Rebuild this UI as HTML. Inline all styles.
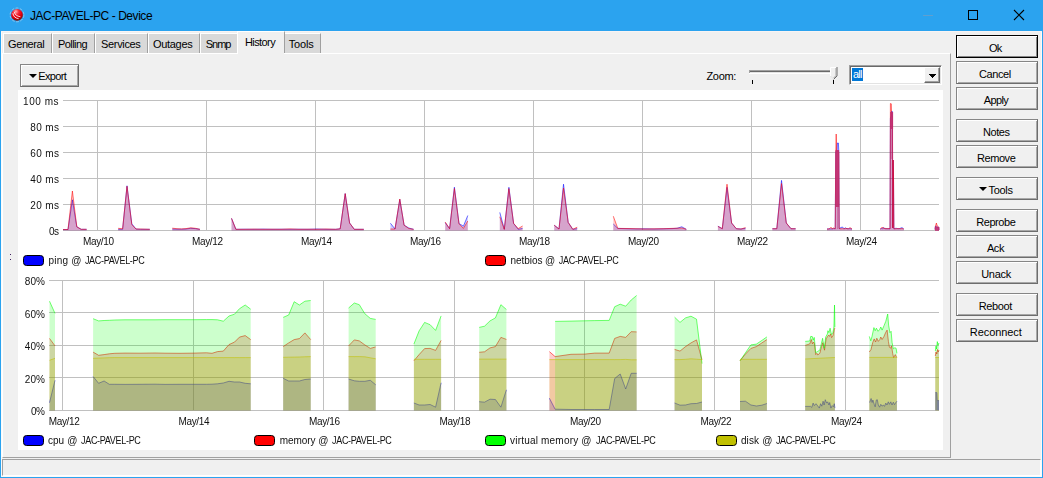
<!DOCTYPE html>
<html><head><meta charset="utf-8">
<style>
*{box-sizing:border-box;margin:0;padding:0}
html,body{width:1043px;height:478px;overflow:hidden;background:#f0f0f0;font-family:"Liberation Sans",sans-serif;font-size:11px;color:#000}
.abs{position:absolute}
#win{position:absolute;left:0;top:0;width:1043px;height:478px;background:#f0f0f0}
.wb{position:absolute;background:#2ba3ef;z-index:10}
#title{position:absolute;left:0;top:0;width:1043px;height:31px;background:#2ba3ef}
#ttext{position:absolute;left:30px;top:9px;font-size:12px;line-height:15px;color:#000;white-space:nowrap;letter-spacing:-0.45px}
.tab{position:absolute;top:33px;height:20px;background:#d9d9d9;border-left:1px solid #fff;border-top:1px solid #fff;border-right:1px solid #a0a0a0}
.tab.sel{top:31px;height:22px;background:#f0f0f0;z-index:3}
.t{position:absolute;white-space:nowrap;font-size:11px;line-height:13px;height:13px}
#panel{position:absolute;left:2px;top:53px;width:949px;height:405px;border:1px solid #fff;border-right:1px solid #a0a0a0;border-bottom:1px solid #a0a0a0;background:#f0f0f0}
.btn{position:absolute;left:956px;width:82px;height:23px;background:#f0f0f0;border:1px solid #868686;border-right-color:#6d6d6d;border-bottom-color:#6d6d6d;box-shadow:inset 1px 1px 0 #fff,inset -1px -1px 0 #a8a8a8}
.btn.def{border:1px solid #000;box-shadow:inset 1px 1px 0 #fff,inset -1px -1px 0 #868686}
.tri{position:absolute;width:0;height:0;border-left:4px solid transparent;border-right:4px solid transparent;border-top:4px solid #000}
#white{position:absolute;left:18px;top:90px;width:925px;height:360px;background:#fff}
#status{position:absolute;left:2px;top:459px;width:1039px;height:17px;border:1px solid #a0a0a0;border-right-color:#fff;border-bottom-color:#fff}
</style></head><body>
<div id="win">
<div id="title"></div>
<div class="wb" style="left:0;top:0;width:1px;height:478px"></div><div class="wb" style="left:1042px;top:0;width:1px;height:478px"></div><div class="wb" style="left:0;top:477px;width:1043px;height:1px"></div>
<svg class="abs" style="left:8px;top:6px" width="18" height="18" viewBox="8 6 18 18"><defs><radialGradient id="rg" cx="0.4" cy="0.22" r="0.85"><stop offset="0" stop-color="#ffb4b8"/><stop offset="0.3" stop-color="#f62836"/><stop offset="0.6" stop-color="#e2000c"/><stop offset="1" stop-color="#5a1206"/></radialGradient></defs><circle cx="17" cy="14.9" r="6.9" fill="none" stroke="#d8e0e8" stroke-opacity="0.6" stroke-width="0.9" stroke-dasharray="3 1.4"/><circle cx="17" cy="14.9" r="5.9" fill="url(#rg)"/><path d="M12.9 13.2 Q13.4 17.8 18.6 18.7" fill="none" stroke="#fff" stroke-opacity="0.95" stroke-width="0.9"/><path d="M14.4 12 Q15 16 20.4 16.7" fill="none" stroke="#fff" stroke-opacity="0.9" stroke-width="0.9"/></svg>
<div id="ttext">JAC-PAVEL-PC - Device</div>
<svg class="abs" style="left:915px;top:5px" width="120" height="22" viewBox="915 5 120 22" shape-rendering="crispEdges"><rect x="923" y="15" width="10" height="1" fill="#5f9fcf"/><rect x="968.5" y="10.5" width="9" height="9" fill="none" stroke="#000" stroke-width="1"/><g shape-rendering="auto"><path d="M1014 10 L1024 20 M1024 10 L1014 20" stroke="#000" stroke-width="1.1" fill="none"/></g></svg>

<div class="tab" style="left:3px;width:49px"></div>
<span class="t" style="left:8px;top:38px;letter-spacing:-0.390px;z-index:5">General</span>
<div class="tab" style="left:52px;width:43px"></div>
<span class="t" style="left:58px;top:38px;letter-spacing:-0.555px;z-index:5">Polling</span>
<div class="tab" style="left:95px;width:53px"></div>
<span class="t" style="left:101.1px;top:38px;letter-spacing:-0.355px;z-index:5">Services</span>
<div class="tab" style="left:148px;width:52px"></div>
<span class="t" style="left:153px;top:38px;letter-spacing:-0.316px;z-index:5">Outages</span>
<div class="tab" style="left:200px;width:37px;border-right:0"></div>
<span class="t" style="left:205.7px;top:38px;letter-spacing:-0.983px;z-index:5">Snmp</span>
<div class="tab sel" style="left:237px;width:48px"></div>
<span class="t" style="left:244.9px;top:36px;letter-spacing:-0.572px;z-index:5">History</span>
<div class="tab" style="left:285px;width:36px;border-left:0"></div>
<span class="t" style="left:288.8px;top:38px;letter-spacing:-0.172px;z-index:5">Tools</span>
<div class="abs" style="left:238px;top:53px;width:46px;height:1px;background:#f0f0f0;z-index:4"></div>
<div id="panel"></div>
<div class="btn" style="left:20px;top:64px;width:59px"></div><div class="tri" style="left:29px;top:74px"></div><span class="t" style="left:38.2px;top:70px;letter-spacing:-0.619px">Export</span>
<span class="t" style="left:706.5px;top:70px;letter-spacing:-0.347px">Zoom:</span>
<div class="btn def" style="top:35px"></div><span class="t" style="left:989px;top:42px;letter-spacing:-0.762px">Ok</span>
<div class="btn" style="top:61px"></div><span class="t" style="left:979px;top:68px;letter-spacing:-0.390px">Cancel</span>
<div class="btn" style="top:87px"></div><span class="t" style="left:983.8px;top:94px;letter-spacing:-0.658px">Apply</span>
<div class="btn" style="top:119px"></div><span class="t" style="left:983px;top:126px;letter-spacing:-0.463px">Notes</span>
<div class="btn" style="top:145px"></div><span class="t" style="left:977.1px;top:152px;letter-spacing:-0.454px">Remove</span>
<div class="btn" style="top:177px"></div><span class="t" style="left:988.5px;top:184px;letter-spacing:-0.297px">Tools</span>
<div class="tri" style="left:979px;top:187px"></div>
<div class="btn" style="top:209px"></div><span class="t" style="left:976.2px;top:216px;letter-spacing:-0.434px">Reprobe</span>
<div class="btn" style="top:235px"></div><span class="t" style="left:986.9px;top:242px;letter-spacing:-0.422px">Ack</span>
<div class="btn" style="top:261px"></div><span class="t" style="left:981.2px;top:268px;letter-spacing:-0.297px">Unack</span>
<div class="btn" style="top:293px"></div><span class="t" style="left:978.7px;top:300px;letter-spacing:-0.357px">Reboot</span>
<div class="btn" style="top:319px"></div><span class="t" style="left:969.8px;top:326px;letter-spacing:-0.074px">Reconnect</span>



<!-- slider -->
<svg class="abs" style="left:745px;top:62px" width="98" height="26" viewBox="745 62 98 26" shape-rendering="crispEdges">
<rect x="749" y="70" width="83" height="1" fill="#a0a0a0"/><rect x="749" y="71" width="83" height="1" fill="#696969"/><rect x="749" y="70" width="1" height="3" fill="#a0a0a0"/><rect x="750" y="72" width="82" height="1" fill="#e3e3e3"/><rect x="749" y="73" width="84" height="1" fill="#fff"/><rect x="832" y="70" width="1" height="4" fill="#fff"/>
<rect x="752" y="80" width="1" height="4" fill="#000"/><rect x="833" y="80" width="1" height="4" fill="#000"/>
<g shape-rendering="auto"><path d="M830.5 67.5 H837 V76 L833.7 79.3 L830.5 76 Z" fill="#f0f0f0"/><path d="M830.5 76 V67.5 H836.5" fill="none" stroke="#fff" stroke-width="1"/><path d="M837 67 V76 L833.7 79.3" fill="none" stroke="#696969" stroke-width="1"/><path d="M836 68 V75.6 L833.7 78" fill="none" stroke="#a0a0a0" stroke-width="1"/><path d="M830.5 76 L833.5 79" fill="none" stroke="#e3e3e3" stroke-width="1"/></g>
</svg>
<!-- combo -->
<div class="abs" style="left:849px;top:65px;width:93px;height:20px;background:#fff;border:1px solid #a0a0a0;border-right-color:#fff;border-bottom-color:#fff;box-shadow:inset 1px 1px 0 #696969,inset -1px -1px 0 #e3e3e3"></div>
<div class="abs" style="left:852px;top:68px;width:11px;height:13px;background:#0078d7;color:#fff;font-size:11px;line-height:13px;padding-left:1px;letter-spacing:-0.8px;white-space:nowrap">all</div>
<div class="abs" style="left:924px;top:67px;width:16px;height:16px;background:#f0f0f0;border:1px solid #fff;border-right-color:#696969;border-bottom-color:#696969;box-shadow:inset -1px -1px 0 #a0a0a0"></div>
<svg class="abs" style="left:928px;top:73px" width="9" height="6" viewBox="0 0 9 6" shape-rendering="crispEdges"><rect x="1" y="1" width="7" height="1"/><rect x="2" y="2" width="5" height="1"/><rect x="3" y="3" width="3" height="1"/><rect x="4" y="4" width="1" height="1"/></svg>
<!-- grip dots -->
<div class="abs" style="left:10px;top:254px;width:1px;height:1px;background:#402060"></div><div class="abs" style="left:10px;top:259px;width:1px;height:1px;background:#402060"></div>
<div id="white"></div>
<svg class="abs" style="left:18px;top:90px" width="925" height="360" viewBox="18 90 925 360">
<g shape-rendering="crispEdges" fill="#c0c0c0">
<rect x="63" y="100" width="876" height="1"/>
<rect x="63" y="126" width="876" height="1"/>
<rect x="63" y="152" width="876" height="1"/>
<rect x="63" y="178" width="876" height="1"/>
<rect x="63" y="204" width="876" height="1"/>
<rect x="63" y="230" width="876" height="1"/>
<rect x="97" y="100" width="1" height="131"/>
<rect x="206" y="100" width="1" height="131"/>
<rect x="315" y="100" width="1" height="131"/>
<rect x="424" y="100" width="1" height="131"/>
<rect x="533" y="100" width="1" height="131"/>
<rect x="642" y="100" width="1" height="131"/>
<rect x="751" y="100" width="1" height="131"/>
<rect x="860" y="100" width="1" height="131"/>
<rect x="49" y="280" width="890" height="1"/>
<rect x="49" y="312" width="890" height="1"/>
<rect x="49" y="345" width="890" height="1"/>
<rect x="49" y="377" width="890" height="1"/>
<rect x="49" y="410" width="890" height="1"/>
<rect x="62" y="280" width="1" height="131"/>
<rect x="193" y="280" width="1" height="131"/>
<rect x="323" y="280" width="1" height="131"/>
<rect x="454" y="280" width="1" height="131"/>
<rect x="584" y="280" width="1" height="131"/>
<rect x="714" y="280" width="1" height="131"/>
<rect x="845" y="280" width="1" height="131"/>
</g>
<path d="M63 229.5 L68 229.5 L72.4 199.8 L76.8 226.8 L81.2 229.3 L86.6 229.3 L86.6 230.5 L63 230.5 Z M118.2 229.3 L122.6 229.3 L127 185.8 L131.8 223.8 L136 229 L140.5 229.3 L149.8 229.3 L149.8 230.5 L118.2 230.5 Z M172.3 229 L177 229.2 L181.5 229.2 L186 229 L190.7 228.3 L195.3 228.6 L199.9 229.3 L199.9 230.5 L172.3 230.5 Z M231.5 218.3 L235.9 229.3 L245 229.2 L254 229.3 L263 229.1 L272 229.3 L281 229.2 L290 229.3 L299 229.2 L308 229.3 L317 229 L326 229.3 L335.7 229.3 L340.2 228.8 L345.2 193.6 L349.6 223 L354.3 229.3 L363.8 229.3 L363.8 230.5 L231.5 230.5 Z M390.4 223.2 L395 229 L399.8 199.4 L404.1 225.2 L408.8 228 L413.6 229.3 L413.6 230.5 L390.4 230.5 Z M445.2 222.6 L449.6 228.7 L454.4 187.2 L459 223.5 L463.4 226.2 L467.8 215.5 L467.8 230.5 L445.2 230.5 Z M499.8 212.4 L504.3 229.3 L508.9 187.3 L513.6 223.4 L518.2 229.3 L522.6 228.4 L522.6 230.5 L499.8 230.5 Z M554.2 225.2 L559 229 L563.5 184.2 L568.2 222.4 L572.8 229.3 L577.2 228.6 L577.2 230.5 L554.2 230.5 Z M613.3 224 L617.8 228.4 L627 228.7 L636 228.9 L645 228.8 L654 229 L663 228.8 L672 228.6 L677 228.3 L681.8 226.8 L686.3 229.3 L686.3 230.5 L613.3 230.5 Z M717.9 226.2 L722.3 228.7 L727 187.3 L731.6 223 L736.3 228.7 L741 229 L745.5 228.3 L745.5 230.5 L717.9 230.5 Z M772.4 228.7 L776.8 228.7 L781.5 180.4 L786.3 223 L791 228.7 L795.6 228.7 L795.6 230.5 L772.4 230.5 Z M827 229 L828.5 228.8 L830 229 L831 228.7 L832 229 L833.5 228.6 L835.2 228.8 L835.8 152 L836.9 150 L837.4 143 L838.4 143 L838.8 152 L839.2 228.6 L841 227.5 L842.5 227 L844 228.8 L845.5 227.8 L847 228.8 L848.5 228.6 L850 228.7 L852 229 L852 230.5 L827 230.5 Z M880.2 229 L881.5 228.5 L882.5 228.8 L883.5 227.5 L885 228.8 L887 228.6 L889 228.8 L890 228.8 L890.4 118 L891.2 116 L891.5 111.2 L892.4 111.5 L892.8 228 L893.2 160 L893.5 177 L893.9 228.8 L896 228.2 L898 228.8 L900 228.4 L902 227.6 L903.8 229 L903.8 230.5 L880.2 230.5 Z M935 229.5 L935.3 226.5 L936.3 226.3 L937 227.5 L938.9 227.2 L939 230 L939 230.5 L935 230.5 Z" fill="#0000ff" fill-opacity="0.2"/>
<path d="M63 229.5 L68 229.5 L72.4 199.8 L76.8 226.8 L81.2 229.3 L86.6 229.3 M118.2 229.3 L122.6 229.3 L127 185.8 L131.8 223.8 L136 229 L140.5 229.3 L149.8 229.3 M172.3 229 L177 229.2 L181.5 229.2 L186 229 L190.7 228.3 L195.3 228.6 L199.9 229.3 M231.5 218.3 L235.9 229.3 L245 229.2 L254 229.3 L263 229.1 L272 229.3 L281 229.2 L290 229.3 L299 229.2 L308 229.3 L317 229 L326 229.3 L335.7 229.3 L340.2 228.8 L345.2 193.6 L349.6 223 L354.3 229.3 L363.8 229.3 M390.4 223.2 L395 229 L399.8 199.4 L404.1 225.2 L408.8 228 L413.6 229.3 M445.2 222.6 L449.6 228.7 L454.4 187.2 L459 223.5 L463.4 226.2 L467.8 215.5 M499.8 212.4 L504.3 229.3 L508.9 187.3 L513.6 223.4 L518.2 229.3 L522.6 228.4 M554.2 225.2 L559 229 L563.5 184.2 L568.2 222.4 L572.8 229.3 L577.2 228.6 M613.3 224 L617.8 228.4 L627 228.7 L636 228.9 L645 228.8 L654 229 L663 228.8 L672 228.6 L677 228.3 L681.8 226.8 L686.3 229.3 M717.9 226.2 L722.3 228.7 L727 187.3 L731.6 223 L736.3 228.7 L741 229 L745.5 228.3 M772.4 228.7 L776.8 228.7 L781.5 180.4 L786.3 223 L791 228.7 L795.6 228.7 M827 229 L828.5 228.8 L830 229 L831 228.7 L832 229 L833.5 228.6 L835.2 228.8 L835.8 152 L836.9 150 L837.4 143 L838.4 143 L838.8 152 L839.2 228.6 L841 227.5 L842.5 227 L844 228.8 L845.5 227.8 L847 228.8 L848.5 228.6 L850 228.7 L852 229 M880.2 229 L881.5 228.5 L882.5 228.8 L883.5 227.5 L885 228.8 L887 228.6 L889 228.8 L890 228.8 L890.4 118 L891.2 116 L891.5 111.2 L892.4 111.5 L892.8 228 L893.2 160 L893.5 177 L893.9 228.8 L896 228.2 L898 228.8 L900 228.4 L902 227.6 L903.8 229 M935 229.5 L935.3 226.5 L936.3 226.3 L937 227.5 L938.9 227.2 L939 230" fill="none" stroke="#0000ff" stroke-opacity="0.55" stroke-width="1" stroke-linejoin="round"/>
<path d="M63 229.5 L68 229.5 L72.4 191 L76.8 226.8 L81.2 229.3 L86.6 229.3 L86.6 230.5 L63 230.5 Z M118.2 228.3 L122.6 228.8 L127 186.3 L131.8 224.6 L136 229 L140.5 229 L149.8 229.3 L149.8 230.5 L118.2 230.5 Z M172.3 228.2 L177 228.7 L181.5 228.9 L186 228.6 L190.7 227.8 L195.3 228.3 L199.9 229.3 L199.9 230.5 L172.3 230.5 Z M231.5 218.3 L235.9 229.3 L245 229.3 L254 229.1 L263 229.3 L272 229.2 L281 229.3 L290 228.9 L299 229.3 L308 229.2 L317 229.3 L326 229 L335.7 229.3 L340.2 228.8 L345.2 193.6 L349.6 223 L354.3 229.3 L363.8 229.3 L363.8 230.5 L231.5 230.5 Z M390.4 229 L395 229 L399.8 199 L404.1 225.2 L408.8 228.5 L413.6 229.3 L413.6 230.5 L390.4 230.5 Z M445.2 222 L449.6 228.7 L454.4 188.5 L459 223.8 L463.4 228.4 L467.8 221 L467.8 230.5 L445.2 230.5 Z M499.8 216.8 L504.3 229.3 L508.9 188.6 L513.6 223.4 L518.2 228.6 L522.6 226 L522.6 230.5 L499.8 230.5 Z M554.2 225.2 L559 229 L563.5 188 L568.2 222.4 L572.8 229.3 L577.2 227.2 L577.2 230.5 L554.2 230.5 Z M613.3 216.2 L617.8 228.4 L627 228.5 L636 228.7 L645 229 L654 228.8 L663 228.7 L672 228.4 L677 228.2 L681.8 228 L686.3 229.3 L686.3 230.5 L613.3 230.5 Z M717.9 226.4 L722.3 228.7 L727 184.2 L731.6 223 L736.3 228.7 L741 229 L745.5 227.6 L745.5 230.5 L717.9 230.5 Z M772.4 228.7 L776.8 228.7 L781.5 183.5 L786.3 223 L791 228.7 L795.6 228.7 L795.6 230.5 L772.4 230.5 Z M827 229 L828.5 229 L830 228.4 L831 227.2 L832 228.8 L833.5 228 L835.2 228.8 L835.8 152 L836.2 134 L836.6 150 L838.4 152 L838.8 152 L839.2 228.6 L841 228.8 L842.5 228.7 L844 228.8 L845.5 228.6 L847 228.5 L848.5 228.8 L850 227.6 L852 229 L852 230.5 L827 230.5 Z M880.2 229 L881.5 228 L882.5 227 L883.5 228.5 L885 228.3 L887 228.8 L889 228.5 L890 228.8 L890.4 103.5 L891.3 103.8 L891.6 116 L892.4 116 L892.8 228 L893.2 160 L893.5 177 L893.9 228.8 L896 228.8 L898 228.5 L900 228.8 L902 228.6 L903.8 229 L903.8 230.5 L880.2 230.5 Z M935 229.5 L935.5 226 L936.4 223 L937.2 226 L938 226.5 L938.9 227.5 L939 230 L939 230.5 L935 230.5 Z" fill="#ff0000" fill-opacity="0.2"/>
<path d="M63 229.5 L68 229.5 L72.4 191 L76.8 226.8 L81.2 229.3 L86.6 229.3 M118.2 228.3 L122.6 228.8 L127 186.3 L131.8 224.6 L136 229 L140.5 229 L149.8 229.3 M172.3 228.2 L177 228.7 L181.5 228.9 L186 228.6 L190.7 227.8 L195.3 228.3 L199.9 229.3 M231.5 218.3 L235.9 229.3 L245 229.3 L254 229.1 L263 229.3 L272 229.2 L281 229.3 L290 228.9 L299 229.3 L308 229.2 L317 229.3 L326 229 L335.7 229.3 L340.2 228.8 L345.2 193.6 L349.6 223 L354.3 229.3 L363.8 229.3 M390.4 229 L395 229 L399.8 199 L404.1 225.2 L408.8 228.5 L413.6 229.3 M445.2 222 L449.6 228.7 L454.4 188.5 L459 223.8 L463.4 228.4 L467.8 221 M499.8 216.8 L504.3 229.3 L508.9 188.6 L513.6 223.4 L518.2 228.6 L522.6 226 M554.2 225.2 L559 229 L563.5 188 L568.2 222.4 L572.8 229.3 L577.2 227.2 M613.3 216.2 L617.8 228.4 L627 228.5 L636 228.7 L645 229 L654 228.8 L663 228.7 L672 228.4 L677 228.2 L681.8 228 L686.3 229.3 M717.9 226.4 L722.3 228.7 L727 184.2 L731.6 223 L736.3 228.7 L741 229 L745.5 227.6 M772.4 228.7 L776.8 228.7 L781.5 183.5 L786.3 223 L791 228.7 L795.6 228.7 M827 229 L828.5 229 L830 228.4 L831 227.2 L832 228.8 L833.5 228 L835.2 228.8 L835.8 152 L836.2 134 L836.6 150 L838.4 152 L838.8 152 L839.2 228.6 L841 228.8 L842.5 228.7 L844 228.8 L845.5 228.6 L847 228.5 L848.5 228.8 L850 227.6 L852 229 M880.2 229 L881.5 228 L882.5 227 L883.5 228.5 L885 228.3 L887 228.8 L889 228.5 L890 228.8 L890.4 103.5 L891.3 103.8 L891.6 116 L892.4 116 L892.8 228 L893.2 160 L893.5 177 L893.9 228.8 L896 228.8 L898 228.5 L900 228.8 L902 228.6 L903.8 229 M935 229.5 L935.5 226 L936.4 223 L937.2 226 L938 226.5 L938.9 227.5 L939 230" fill="none" stroke="#ff0000" stroke-opacity="0.55" stroke-width="1" stroke-linejoin="round"/>
<rect x="835.5" y="150" width="3.6" height="57" fill="#c02c6e" fill-opacity="0.92"/><rect x="837" y="207" width="0.9" height="22" fill="#c02c6e" fill-opacity="0.45"/><rect x="890.2" y="112" width="2.9" height="17" fill="#c02c6e" fill-opacity="0.92"/><rect x="890.2" y="129" width="2.9" height="30" fill="#c02c6e" fill-opacity="0.35"/><rect x="935" y="226.8" width="4" height="4" fill="#c02c6e" fill-opacity="0.85"/>
<path d="M49.5 402.7 L55 380.3 L55 410.5 L49.5 410.5 Z M93.1 376.5 L98.6 383.3 L104.1 381 L109.3 384.3 L114.8 384.3 L125 384.4 L140 384.3 L155 384.2 L165 384.4 L180 384.3 L195 384.3 L206.5 384.3 L212 384.2 L217.5 383.8 L223.3 383 L229 381.3 L234.5 382 L239.5 382 L245.2 383.3 L250.7 383.8 L250.7 410.5 L93.1 410.5 Z M283.2 378.3 L288.7 381 L294.2 381 L299.4 381 L304.9 379.5 L310.7 379 L310.7 410.5 L283.2 410.5 Z M348.6 379 L354.3 380.8 L359.3 381.3 L364.8 381.3 L370.3 380.3 L375.7 384.8 L375.7 410.5 L348.6 410.5 Z M413.9 403 L419.1 405 L424.6 405 L430.1 404.5 L435.6 407.2 L441.1 382.8 L441.1 410.5 L413.9 410.5 Z M479.2 401.7 L484.5 402.2 L490 399.2 L495.4 399.5 L500.9 407.2 L506.4 389.8 L506.4 410.5 L479.2 410.5 Z M549.4 398.2 L555.1 409.2 L571 409.5 L584.8 409.5 L594.8 409.5 L609.2 409.5 L614.7 378.5 L620.2 374 L625.7 389 L631.2 373.3 L636.6 373.3 L636.6 410.5 L549.4 410.5 Z M674.6 403 L680 405.2 L685.5 405 L691 403.7 L696.5 403.5 L702 402 L702 410.5 L674.6 410.5 Z M740 401.5 L745.4 401.2 L750.9 405 L756.4 406 L761.9 405.2 L766.9 403.5 L766.9 410.5 L740 410.5 Z M805.2 406.4 L810.6 406.4 L811.8 407.4 L813.1 403.1 L814.3 405.6 L816 403.7 L817.5 405.6 L819.3 408.1 L820.6 403.7 L821.8 406.2 L823.1 401.2 L824.1 405 L825.3 399.7 L826.6 403.1 L827.7 401.8 L828.9 405 L829.7 402.5 L830.9 408.1 L832.2 405.6 L833.4 406.8 L834.3 403.7 L834.9 408.1 L834.9 410.5 L805.2 410.5 Z M869.6 402.5 L871.1 398.5 L872.1 402.5 L872.9 400 L874.2 404.3 L875.2 406.8 L876.3 400 L877.3 399.7 L878.3 405 L879.6 407.2 L880.8 404.3 L882 406.2 L883.3 405 L884.5 406.4 L885.8 403.1 L887 405 L888.3 401.8 L889.5 404.3 L890.8 401.8 L892 405 L893.3 402.2 L894.5 404.7 L895.8 402.5 L897 401.2 L897 410.5 L869.6 410.5 Z M935.3 392.5 L936.8 392.5 L937.2 400.5 L939 400.5 L939 410.5 L935.3 410.5 Z" fill="#0000ff" fill-opacity="0.2"/>
<path d="M49.5 402.7 L55 380.3 M93.1 376.5 L98.6 383.3 L104.1 381 L109.3 384.3 L114.8 384.3 L125 384.4 L140 384.3 L155 384.2 L165 384.4 L180 384.3 L195 384.3 L206.5 384.3 L212 384.2 L217.5 383.8 L223.3 383 L229 381.3 L234.5 382 L239.5 382 L245.2 383.3 L250.7 383.8 M283.2 378.3 L288.7 381 L294.2 381 L299.4 381 L304.9 379.5 L310.7 379 M348.6 379 L354.3 380.8 L359.3 381.3 L364.8 381.3 L370.3 380.3 L375.7 384.8 M413.9 403 L419.1 405 L424.6 405 L430.1 404.5 L435.6 407.2 L441.1 382.8 M479.2 401.7 L484.5 402.2 L490 399.2 L495.4 399.5 L500.9 407.2 L506.4 389.8 M549.4 398.2 L555.1 409.2 L571 409.5 L584.8 409.5 L594.8 409.5 L609.2 409.5 L614.7 378.5 L620.2 374 L625.7 389 L631.2 373.3 L636.6 373.3 M674.6 403 L680 405.2 L685.5 405 L691 403.7 L696.5 403.5 L702 402 M740 401.5 L745.4 401.2 L750.9 405 L756.4 406 L761.9 405.2 L766.9 403.5 M805.2 406.4 L810.6 406.4 L811.8 407.4 L813.1 403.1 L814.3 405.6 L816 403.7 L817.5 405.6 L819.3 408.1 L820.6 403.7 L821.8 406.2 L823.1 401.2 L824.1 405 L825.3 399.7 L826.6 403.1 L827.7 401.8 L828.9 405 L829.7 402.5 L830.9 408.1 L832.2 405.6 L833.4 406.8 L834.3 403.7 L834.9 408.1 M869.6 402.5 L871.1 398.5 L872.1 402.5 L872.9 400 L874.2 404.3 L875.2 406.8 L876.3 400 L877.3 399.7 L878.3 405 L879.6 407.2 L880.8 404.3 L882 406.2 L883.3 405 L884.5 406.4 L885.8 403.1 L887 405 L888.3 401.8 L889.5 404.3 L890.8 401.8 L892 405 L893.3 402.2 L894.5 404.7 L895.8 402.5 L897 401.2 M935.3 392.5 L936.8 392.5 L937.2 400.5 L939 400.5" fill="none" stroke="#0000ff" stroke-opacity="0.55" stroke-width="1" stroke-linejoin="round"/>
<path d="M49.5 338.4 L55 345.9 L55 410.5 L49.5 410.5 Z M93.1 352.1 L98.6 355.3 L104.1 354.6 L109.3 353.8 L114.8 353.3 L125 353.1 L140 353.2 L155 353 L165 353.2 L180 353.3 L195 353.1 L206.5 352.8 L212 353.3 L217.5 351.6 L223.3 351.1 L229 344.6 L234.5 342.1 L239.5 337.1 L245.2 335.6 L250.7 339.6 L250.7 410.5 L93.1 410.5 Z M283.2 346.6 L288.7 342.9 L294.2 339.6 L299.4 338.6 L304.9 332.9 L310.7 339.6 L310.7 410.5 L283.2 410.5 Z M348.6 345.9 L354.3 339.9 L359.3 340.9 L364.8 344.9 L370.3 348.4 L375.7 346.9 L375.7 410.5 L348.6 410.5 Z M413.9 360.8 L419.1 354.6 L424.6 348.6 L430.1 348.4 L435.6 350.4 L441.1 340.4 L441.1 410.5 L413.9 410.5 Z M479.2 352.3 L484.5 351.8 L490 347.9 L495.4 346.6 L500.9 337.4 L506.4 339.4 L506.4 410.5 L479.2 410.5 Z M549.4 351.6 L555.1 356.6 L571 354.3 L584.8 354.1 L594.8 353.1 L609.2 353.1 L614.7 338.4 L620.2 336.4 L625.7 337.4 L631.2 331.7 L636.6 331.9 L636.6 410.5 L549.4 410.5 Z M674.6 349.4 L680 351.1 L685.5 346.6 L691 342.9 L696.5 339.9 L702 359.8 L702 410.5 L674.6 410.5 Z M740 360.8 L745.4 354.1 L750.9 348.4 L756.4 346.6 L761.9 342.9 L766.9 339.6 L766.9 410.5 L740 410.5 Z M805.2 345.4 L809.8 343.9 L811.3 339.5 L812.5 343.9 L813.6 342 L814.4 343.3 L815.7 354.6 L816.9 353.3 L817.8 355 L819.8 353.3 L821.6 346.4 L822.8 342.7 L824.5 350.2 L826.1 338.9 L827.6 336.4 L828.6 335.1 L829.5 336.4 L830.7 333.9 L831.6 337.6 L832.9 335.8 L834.1 330.1 L834.9 327.9 L834.9 410.5 L805.2 410.5 Z M869.3 352 L871 349.5 L872.7 342.6 L874.2 338.9 L875.6 342 L876.8 338.2 L878.3 341.4 L879.8 339.5 L880.8 337 L882.1 339.5 L884 336.4 L885.6 332.6 L887.1 330.1 L888.4 341.4 L889.4 347 L890.6 348.3 L891.5 345.8 L892.7 353.3 L893.6 357.7 L895.3 354.6 L896.5 357.1 L896.9 357.5 L896.9 410.5 L869.3 410.5 Z M935.3 356 L936 352 L936.8 354 L937.5 349.5 L938.2 352 L939 350 L939 410.5 L935.3 410.5 Z" fill="#ff0000" fill-opacity="0.2"/>
<path d="M49.5 338.4 L55 345.9 M93.1 352.1 L98.6 355.3 L104.1 354.6 L109.3 353.8 L114.8 353.3 L125 353.1 L140 353.2 L155 353 L165 353.2 L180 353.3 L195 353.1 L206.5 352.8 L212 353.3 L217.5 351.6 L223.3 351.1 L229 344.6 L234.5 342.1 L239.5 337.1 L245.2 335.6 L250.7 339.6 M283.2 346.6 L288.7 342.9 L294.2 339.6 L299.4 338.6 L304.9 332.9 L310.7 339.6 M348.6 345.9 L354.3 339.9 L359.3 340.9 L364.8 344.9 L370.3 348.4 L375.7 346.9 M413.9 360.8 L419.1 354.6 L424.6 348.6 L430.1 348.4 L435.6 350.4 L441.1 340.4 M479.2 352.3 L484.5 351.8 L490 347.9 L495.4 346.6 L500.9 337.4 L506.4 339.4 M549.4 351.6 L555.1 356.6 L571 354.3 L584.8 354.1 L594.8 353.1 L609.2 353.1 L614.7 338.4 L620.2 336.4 L625.7 337.4 L631.2 331.7 L636.6 331.9 M674.6 349.4 L680 351.1 L685.5 346.6 L691 342.9 L696.5 339.9 L702 359.8 M740 360.8 L745.4 354.1 L750.9 348.4 L756.4 346.6 L761.9 342.9 L766.9 339.6 M805.2 345.4 L809.8 343.9 L811.3 339.5 L812.5 343.9 L813.6 342 L814.4 343.3 L815.7 354.6 L816.9 353.3 L817.8 355 L819.8 353.3 L821.6 346.4 L822.8 342.7 L824.5 350.2 L826.1 338.9 L827.6 336.4 L828.6 335.1 L829.5 336.4 L830.7 333.9 L831.6 337.6 L832.9 335.8 L834.1 330.1 L834.9 327.9 M869.3 352 L871 349.5 L872.7 342.6 L874.2 338.9 L875.6 342 L876.8 338.2 L878.3 341.4 L879.8 339.5 L880.8 337 L882.1 339.5 L884 336.4 L885.6 332.6 L887.1 330.1 L888.4 341.4 L889.4 347 L890.6 348.3 L891.5 345.8 L892.7 353.3 L893.6 357.7 L895.3 354.6 L896.5 357.1 L896.9 357.5 M935.3 356 L936 352 L936.8 354 L937.5 349.5 L938.2 352 L939 350" fill="none" stroke="#ff0000" stroke-opacity="0.55" stroke-width="1" stroke-linejoin="round"/>
<path d="M49.5 301.2 L55 313.4 L55 410.5 L49.5 410.5 Z M93.1 318.7 L98.6 320.9 L104.1 320.5 L109.3 320.3 L114.8 320 L125 319.8 L140 319.8 L155 319.8 L165 319.7 L180 319.7 L195 319.7 L206.5 319.6 L212 319.6 L217.5 319.8 L223.3 321.2 L229 316 L234.5 314.2 L239.5 308.7 L245.2 305 L250.7 309.2 L250.7 410.5 L93.1 410.5 Z M283.2 317.4 L288.7 315 L294.2 301.7 L299.4 305 L304.9 301.2 L310.7 300.5 L310.7 410.5 L283.2 410.5 Z M348.6 308 L354.3 303 L359.3 304.7 L364.8 313.7 L370.3 318.4 L375.7 319.4 L375.7 410.5 L348.6 410.5 Z M413.9 344.1 L419.1 330.9 L424.6 322.4 L430.1 324.7 L435.6 330.4 L441.1 315.9 L441.1 410.5 L413.9 410.5 Z M479.2 327.4 L484.5 326.2 L490 320.9 L495.4 317.9 L500.9 304.7 L506.4 309.5 L506.4 410.5 L479.2 410.5 Z M555.1 321.4 L571 321.1 L584.8 320.8 L594.8 320.6 L609.2 320.4 L614.7 306.7 L620.2 304.2 L625.7 306.2 L631.2 300 L636.6 295.5 L636.6 410.5 L555.1 410.5 Z M674.6 317.2 L680 322.4 L685.5 317.9 L691 316.2 L696.5 319.2 L702 363.6 L702 410.5 L674.6 410.5 Z M740 360.8 L745.4 352.9 L750.9 344.9 L756.4 344.1 L761.9 340.4 L766.9 336.9 L766.9 410.5 L740 410.5 Z M805.2 341.4 L809.8 341 L810.7 336.4 L812.3 336.6 L813.2 340.2 L814.2 337.4 L814.8 342.7 L815.7 352.7 L817.6 351.4 L819.8 350.2 L821.3 343.9 L822.6 338.3 L824.2 348.3 L825.7 337 L827.4 333.9 L827.9 330.7 L828.9 332.6 L830.1 328.2 L831.4 334.5 L832.9 332.6 L833.9 327 L834.5 305 L834.9 327 L834.9 410.5 L805.2 410.5 Z M869.3 336.4 L870.8 340.8 L872 336.4 L873.9 327.6 L875.2 330.7 L876.4 328.2 L878.1 331.3 L879.6 329.5 L880.8 327 L882.1 330.1 L884 325.7 L885.8 321.3 L887.7 314 L888.6 325.1 L889.9 332.6 L891.1 331.3 L892.1 342.6 L893.4 348.9 L894.9 347.7 L896.1 348.3 L896.9 353.3 L896.9 410.5 L869.3 410.5 Z M935.3 351 L936 346 L936.6 349 L937.3 341.6 L938 345 L939 343 L939 410.5 L935.3 410.5 Z" fill="#00ff00" fill-opacity="0.2"/>
<path d="M49.5 301.2 L55 313.4 M93.1 318.7 L98.6 320.9 L104.1 320.5 L109.3 320.3 L114.8 320 L125 319.8 L140 319.8 L155 319.8 L165 319.7 L180 319.7 L195 319.7 L206.5 319.6 L212 319.6 L217.5 319.8 L223.3 321.2 L229 316 L234.5 314.2 L239.5 308.7 L245.2 305 L250.7 309.2 M283.2 317.4 L288.7 315 L294.2 301.7 L299.4 305 L304.9 301.2 L310.7 300.5 M348.6 308 L354.3 303 L359.3 304.7 L364.8 313.7 L370.3 318.4 L375.7 319.4 M413.9 344.1 L419.1 330.9 L424.6 322.4 L430.1 324.7 L435.6 330.4 L441.1 315.9 M479.2 327.4 L484.5 326.2 L490 320.9 L495.4 317.9 L500.9 304.7 L506.4 309.5 M555.1 321.4 L571 321.1 L584.8 320.8 L594.8 320.6 L609.2 320.4 L614.7 306.7 L620.2 304.2 L625.7 306.2 L631.2 300 L636.6 295.5 M674.6 317.2 L680 322.4 L685.5 317.9 L691 316.2 L696.5 319.2 L702 363.6 M740 360.8 L745.4 352.9 L750.9 344.9 L756.4 344.1 L761.9 340.4 L766.9 336.9 M805.2 341.4 L809.8 341 L810.7 336.4 L812.3 336.6 L813.2 340.2 L814.2 337.4 L814.8 342.7 L815.7 352.7 L817.6 351.4 L819.8 350.2 L821.3 343.9 L822.6 338.3 L824.2 348.3 L825.7 337 L827.4 333.9 L827.9 330.7 L828.9 332.6 L830.1 328.2 L831.4 334.5 L832.9 332.6 L833.9 327 L834.5 305 L834.9 327 M869.3 336.4 L870.8 340.8 L872 336.4 L873.9 327.6 L875.2 330.7 L876.4 328.2 L878.1 331.3 L879.6 329.5 L880.8 327 L882.1 330.1 L884 325.7 L885.8 321.3 L887.7 314 L888.6 325.1 L889.9 332.6 L891.1 331.3 L892.1 342.6 L893.4 348.9 L894.9 347.7 L896.1 348.3 L896.9 353.3 M935.3 351 L936 346 L936.6 349 L937.3 341.6 L938 345 L939 343" fill="none" stroke="#00ff00" stroke-opacity="0.55" stroke-width="1" stroke-linejoin="round"/>
<path d="M49.5 360.3 L55 358.3 L55 410.5 L49.5 410.5 Z M93.1 358.3 L98.6 358.1 L104.1 357.9 L109.3 357.7 L114.8 357.6 L125 357.6 L140 357.6 L155 357.6 L165 357.6 L180 357.6 L195 357.6 L206.5 357.6 L212 357.6 L217.5 357.6 L223.3 357.6 L229 357.6 L234.5 357.6 L239.5 357.6 L245.2 357.6 L250.7 357.6 L250.7 410.5 L93.1 410.5 Z M283.2 357.3 L288.7 357.2 L294.2 357.1 L299.4 357 L304.9 356.8 L310.7 356.6 L310.7 410.5 L283.2 410.5 Z M348.6 356.6 L354.3 356.6 L359.3 356.6 L364.8 356.8 L370.3 357.8 L375.7 358.8 L375.7 410.5 L348.6 410.5 Z M413.9 359.3 L419.1 359.3 L424.6 359.3 L430.1 359.3 L435.6 359.3 L441.1 359.3 L441.1 410.5 L413.9 410.5 Z M479.2 359.1 L484.5 359.1 L490 359.1 L495.4 359.1 L500.9 359.1 L506.4 359.1 L506.4 410.5 L479.2 410.5 Z M549.4 359.6 L555.1 359.6 L571 359.6 L584.8 359.6 L594.8 359.6 L609.2 359.6 L614.7 359.6 L620.2 359.6 L625.7 359.4 L631.2 359.8 L636.6 359.8 L636.6 410.5 L549.4 410.5 Z M674.6 359.6 L680 359.6 L685.5 359.3 L691 358.8 L696.5 359.2 L702 359.6 L702 410.5 L674.6 410.5 Z M740 359.3 L745.4 359.3 L750.9 359.3 L756.4 359.3 L761.9 359.3 L766.9 359.3 L766.9 410.5 L740 410.5 Z M805.2 359 L820 358.2 L834.9 357.5 L834.9 410.5 L805.2 410.5 Z M869.3 357.4 L896.9 357.4 L896.9 410.5 L869.3 410.5 Z M935.3 357.5 L939 357.5 L939 410.5 L935.3 410.5 Z" fill="#c0c000" fill-opacity="0.2"/>
<path d="M49.5 360.3 L55 358.3 M93.1 358.3 L98.6 358.1 L104.1 357.9 L109.3 357.7 L114.8 357.6 L125 357.6 L140 357.6 L155 357.6 L165 357.6 L180 357.6 L195 357.6 L206.5 357.6 L212 357.6 L217.5 357.6 L223.3 357.6 L229 357.6 L234.5 357.6 L239.5 357.6 L245.2 357.6 L250.7 357.6 M283.2 357.3 L288.7 357.2 L294.2 357.1 L299.4 357 L304.9 356.8 L310.7 356.6 M348.6 356.6 L354.3 356.6 L359.3 356.6 L364.8 356.8 L370.3 357.8 L375.7 358.8 M413.9 359.3 L419.1 359.3 L424.6 359.3 L430.1 359.3 L435.6 359.3 L441.1 359.3 M479.2 359.1 L484.5 359.1 L490 359.1 L495.4 359.1 L500.9 359.1 L506.4 359.1 M549.4 359.6 L555.1 359.6 L571 359.6 L584.8 359.6 L594.8 359.6 L609.2 359.6 L614.7 359.6 L620.2 359.6 L625.7 359.4 L631.2 359.8 L636.6 359.8 M674.6 359.6 L680 359.6 L685.5 359.3 L691 358.8 L696.5 359.2 L702 359.6 M740 359.3 L745.4 359.3 L750.9 359.3 L756.4 359.3 L761.9 359.3 L766.9 359.3 M805.2 359 L820 358.2 L834.9 357.5 M869.3 357.4 L896.9 357.4 M935.3 357.5 L939 357.5" fill="none" stroke="#c0c000" stroke-opacity="0.55" stroke-width="1" stroke-linejoin="round"/>
<rect x="935.3" y="393" width="1.8" height="17" fill="#6a7088" fill-opacity="0.55"/><rect x="937.1" y="401" width="1.9" height="9" fill="#5860a8" fill-opacity="0.6"/>
<g font-family="Liberation Sans, sans-serif" font-size="10" fill="#111" opacity="0.999">
<text x="59.1" y="105" text-anchor="end" letter-spacing="0.541">100 ms</text>
<text x="59.3" y="131" text-anchor="end" letter-spacing="0.341">80 ms</text>
<text x="59.3" y="157" text-anchor="end" letter-spacing="0.341">60 ms</text>
<text x="59.3" y="183" text-anchor="end" letter-spacing="0.341">40 ms</text>
<text x="59.3" y="209" text-anchor="end" letter-spacing="0.341">20 ms</text>
<text x="58.4" y="235" text-anchor="end" letter-spacing="-0.562">0s</text>
<text x="98.3" y="245" text-anchor="middle" letter-spacing="-0.359">May/10</text>
<text x="207.3" y="245" text-anchor="middle" letter-spacing="-0.359">May/12</text>
<text x="316.3" y="245" text-anchor="middle" letter-spacing="-0.359">May/14</text>
<text x="425.3" y="245" text-anchor="middle" letter-spacing="-0.359">May/16</text>
<text x="534.3" y="245" text-anchor="middle" letter-spacing="-0.359">May/18</text>
<text x="643.3" y="245" text-anchor="middle" letter-spacing="-0.359">May/20</text>
<text x="752.3" y="245" text-anchor="middle" letter-spacing="-0.359">May/22</text>
<text x="861.3" y="245" text-anchor="middle" letter-spacing="-0.359">May/24</text>
<text x="45.1" y="285" text-anchor="end" letter-spacing="0.092">80%</text>
<text x="45.1" y="318" text-anchor="end" letter-spacing="0.092">60%</text>
<text x="45.1" y="350" text-anchor="end" letter-spacing="0.092">40%</text>
<text x="45.1" y="383" text-anchor="end" letter-spacing="0.092">20%</text>
<text x="44.5" y="415" text-anchor="end" letter-spacing="-0.453">0%</text>
<text x="48.8" y="425" text-anchor="start" letter-spacing="-0.359">May/12</text>
<text x="193.8" y="425" text-anchor="middle" letter-spacing="-0.359">May/14</text>
<text x="324.3" y="425" text-anchor="middle" letter-spacing="-0.359">May/16</text>
<text x="454.8" y="425" text-anchor="middle" letter-spacing="-0.359">May/18</text>
<text x="585.3" y="425" text-anchor="middle" letter-spacing="-0.359">May/20</text>
<text x="715.8" y="425" text-anchor="middle" letter-spacing="-0.359">May/22</text>
<text x="846.3" y="425" text-anchor="middle" letter-spacing="-0.359">May/24</text>
<text x="48.5" y="264.4" text-anchor="start" letter-spacing="0.191">ping @</text><text transform="translate(84.9 264.4) scale(0.9043 1)" letter-spacing="-0.35">JAC-PAVEL-PC</text>
<text x="510.6" y="264.4" text-anchor="start" letter-spacing="-0.073">netbios @</text><text transform="translate(558.8 264.4) scale(0.9043 1)" letter-spacing="-0.35">JAC-PAVEL-PC</text>
<text x="47.9" y="444.4" text-anchor="start" letter-spacing="0.084">cpu @</text><text transform="translate(81 444.4) scale(0.9043 1)" letter-spacing="-0.35">JAC-PAVEL-PC</text>
<text x="279.8" y="444.4" text-anchor="start" letter-spacing="-0.064">memory @</text><text transform="translate(332 444.4) scale(0.9043 1)" letter-spacing="-0.35">JAC-PAVEL-PC</text>
<text x="510.1" y="444.4" text-anchor="start" letter-spacing="0.193">virtual memory @</text><text transform="translate(596 444.4) scale(0.9043 1)" letter-spacing="-0.35">JAC-PAVEL-PC</text>
<text x="740.9" y="444.4" text-anchor="start" letter-spacing="0.136">disk @</text><text transform="translate(775.9 444.4) scale(0.9043 1)" letter-spacing="-0.35">JAC-PAVEL-PC</text>
</g>
<rect x="23.5" y="255.5" width="20" height="10" rx="3" ry="3" fill="#0000ff" stroke="#000" stroke-width="1"/>
<rect x="485.5" y="255.5" width="20" height="10" rx="3" ry="3" fill="#ff0000" stroke="#000" stroke-width="1"/>
<rect x="23.5" y="435.5" width="20" height="10" rx="3" ry="3" fill="#0000ff" stroke="#000" stroke-width="1"/>
<rect x="254.5" y="435.5" width="20" height="10" rx="3" ry="3" fill="#ff0000" stroke="#000" stroke-width="1"/>
<rect x="485.5" y="435.5" width="20" height="10" rx="3" ry="3" fill="#00ff00" stroke="#000" stroke-width="1"/>
<rect x="716.5" y="435.5" width="20" height="10" rx="3" ry="3" fill="#c0c000" stroke="#000" stroke-width="1"/>
</svg>

<div id="status"></div>
<div class="abs" style="left:1px;top:31px;width:1px;height:446px;background:#fbfbfb"></div><div class="abs" style="left:1041px;top:31px;width:1px;height:446px;background:#fbfbfb"></div><div class="abs" style="left:1px;top:476px;width:1041px;height:1px;background:#fbfbfb"></div><div class="abs" style="left:1px;top:31px;width:1041px;height:1px;background:#f8f4f4"></div>
</div>
</body></html>
